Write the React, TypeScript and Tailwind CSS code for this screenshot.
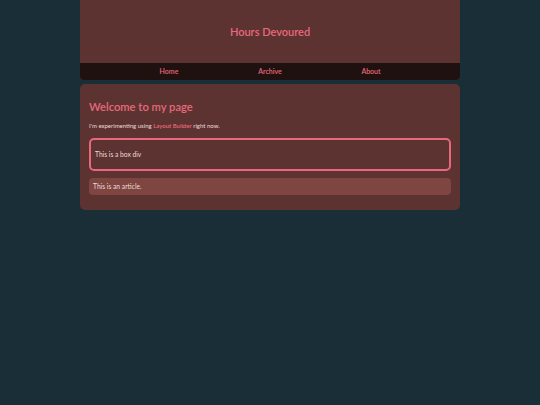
export default function App() {
  const font = { fontFamily: 'Lato, "Noto Sans", sans-serif' };
  return (
    <div className="min-h-[405px] w-full bg-[#1a2e37]" style={font}>
      <div className="mx-auto w-[380px]">
        <header className="bg-[#5c3331] rounded-b-[4px] overflow-hidden">
          <div className="h-[63px] flex items-center justify-center">
            <h1 className="text-[11px] font-semibold text-[#e8697b] leading-none">Hours Devoured</h1>
          </div>
          <nav className="h-[17px] bg-[#1e110f] flex items-center justify-center">
            {['Home', 'Archive', 'About'].map((item) => (
              <a key={item} className="w-[101px] text-center text-[7px] font-semibold text-[#e8697b] leading-none">
                {item}
              </a>
            ))}
          </nav>
        </header>
        <main className="mt-[4px] bg-[#5c3331] rounded-[5px] px-[9px] pt-[17px] pb-[15px]">
          <h2 className="text-[11.2px] font-semibold text-[#e8697b] leading-none">Welcome to my page</h2>
          <p className="mt-[11px] text-[6px] text-[#ecdcd8] leading-none">
            I'm experimenting using <span className="font-semibold text-[#e8697b]">Layout Builder</span> right now.
          </p>
          <div className="mt-[9px] h-[33px] border-2 border-[#e8697b] rounded-[5px] flex items-center px-[4px]">
            <span className="text-[6.7px] text-[#ecdcd8] leading-none">This is a box div</span>
          </div>
          <div className="mt-[7px] h-[17px] bg-[#7f4541] rounded-[4px] flex items-center px-[4px]">
            <span className="text-[6.7px] text-[#ecdcd8] leading-none">This is an article.</span>
          </div>
        </main>
      </div>
    </div>
  );
}
